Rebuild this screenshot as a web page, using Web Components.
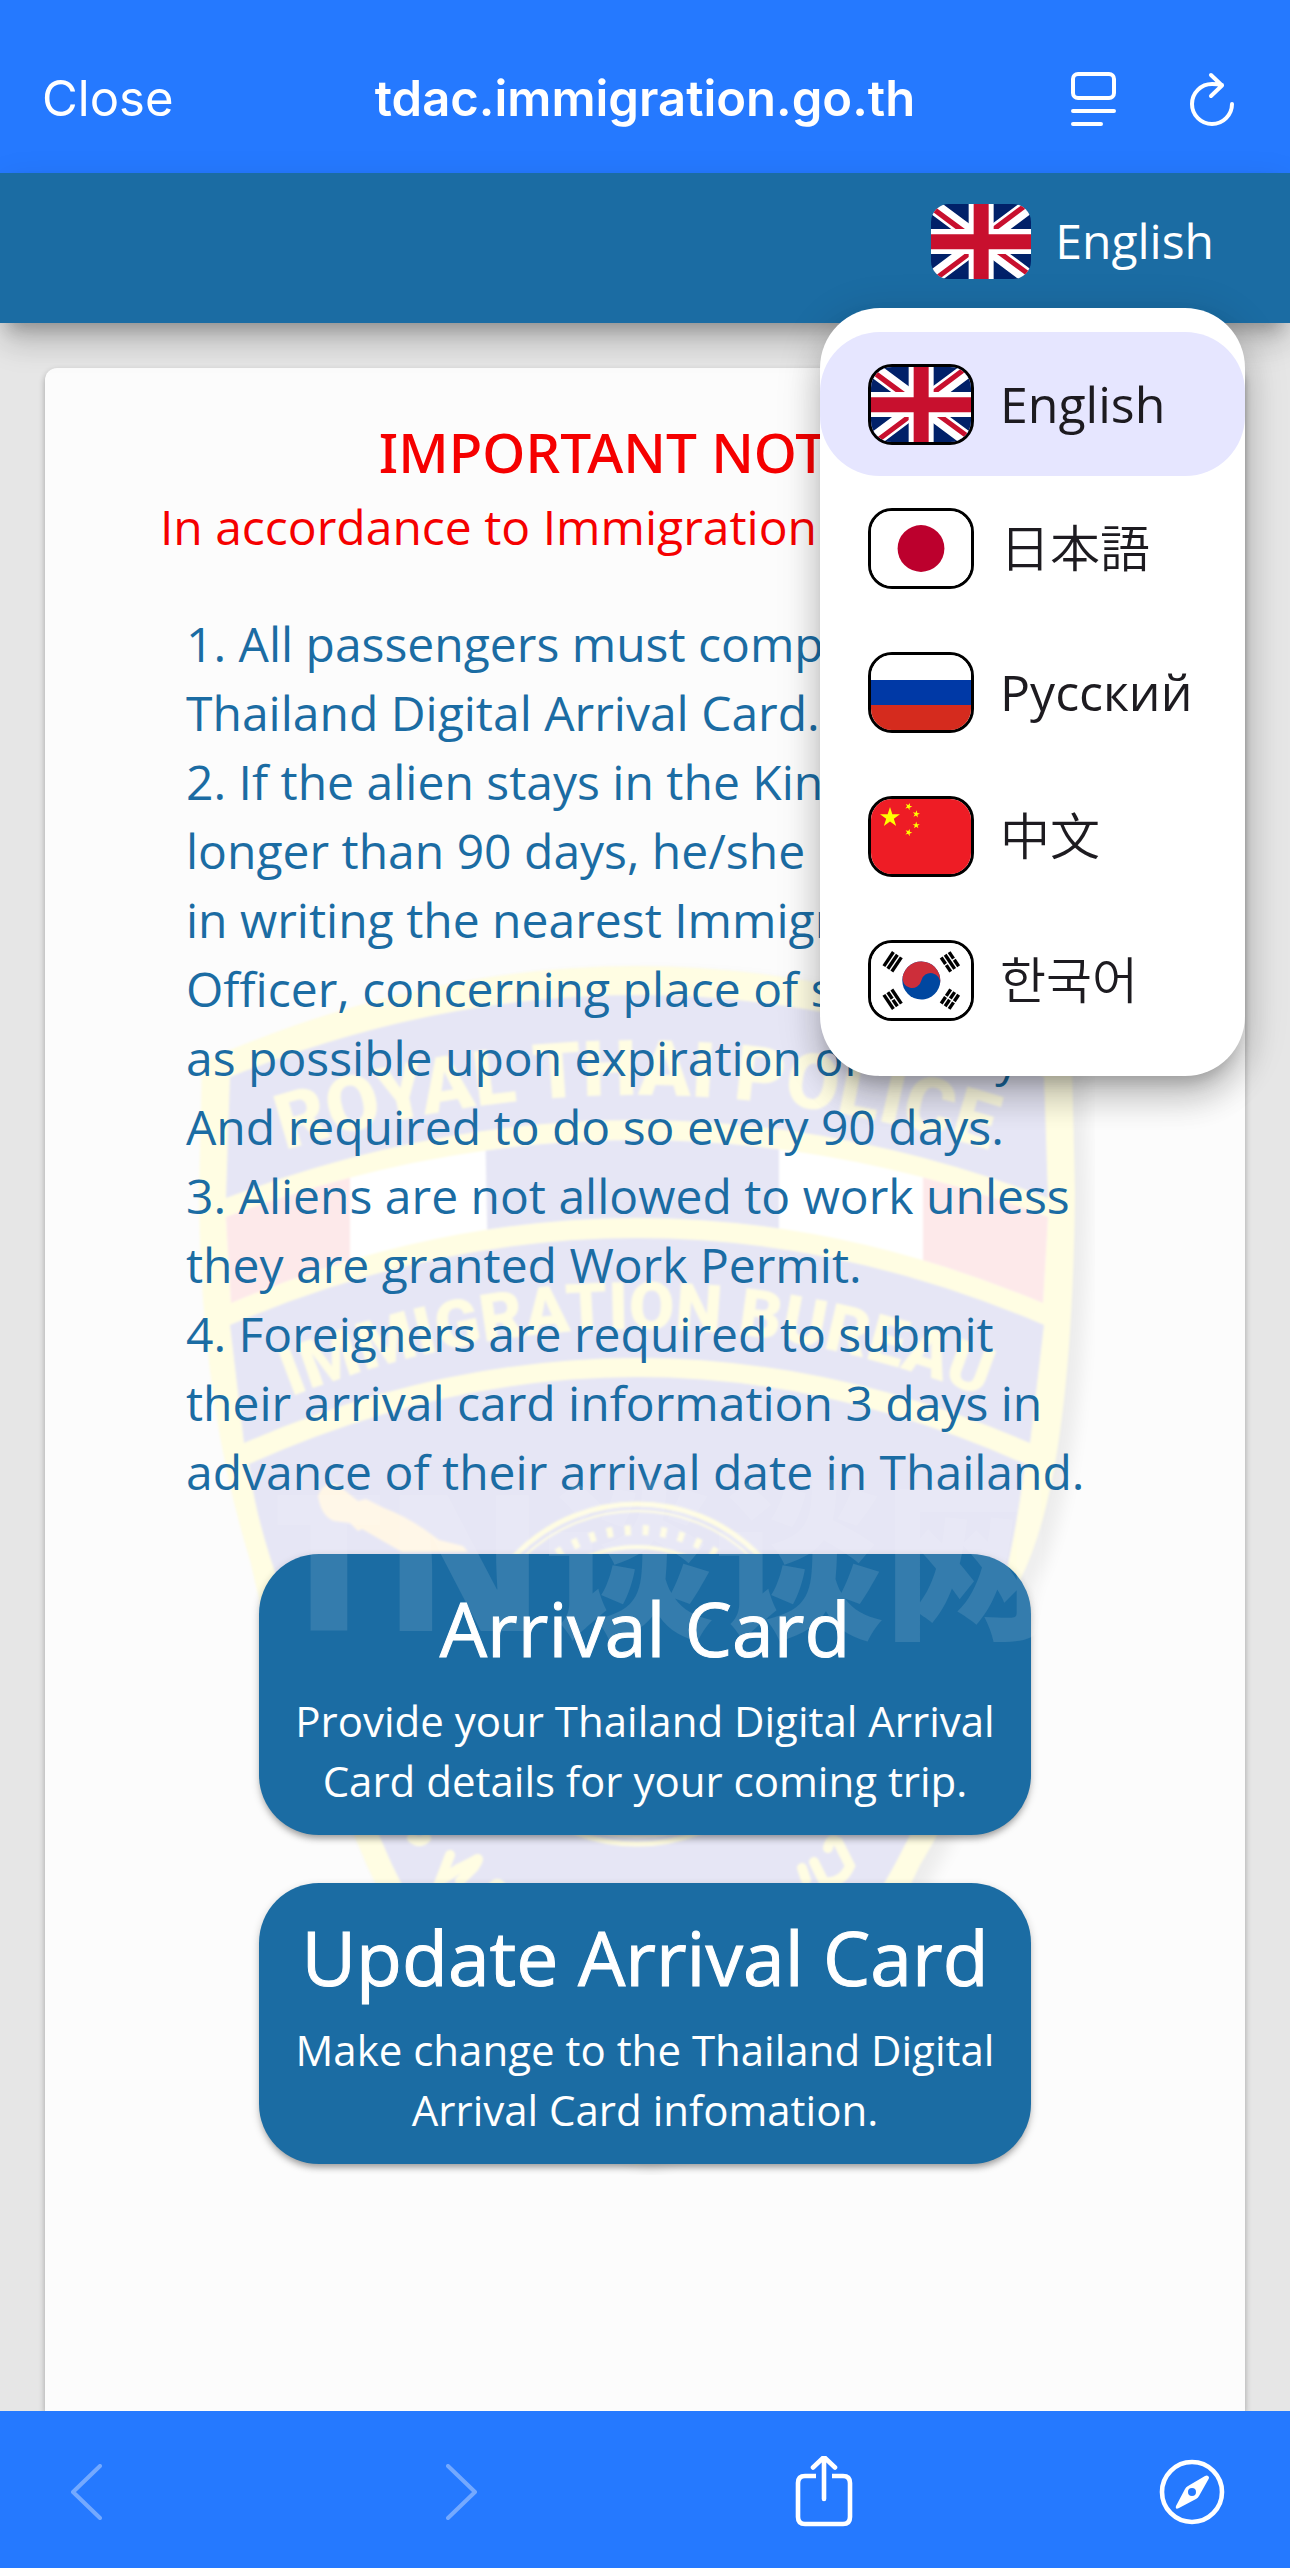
<!DOCTYPE html>
<html lang="en">
<head>
<meta charset="utf-8">
<meta name="viewport" content="width=device-width, initial-scale=1">
<title>Thailand Digital Arrival Card</title>
<style>
  body { margin: 0; background: #e6e6e6; font-family: "Open Sans", "Noto Sans", "Noto Sans CJK JP", sans-serif; }
</style>
</head>
<body>
<arrival-app></arrival-app>

<script>
class BaseElement extends HTMLElement {
  connectedCallback() {
    if (this.shadowRoot) return;
    this.attachShadow({ mode: 'open' }).innerHTML = this.render();
  }
}

/* ---------- flags ---------- */
const star = (cx, cy, r, turn) => {
  let pts = [];
  for (let i = 0; i < 10; i++) {
    const a = (turn - 90 + i * 36) * Math.PI / 180;
    const q = i % 2 ? r * 0.382 : r;
    pts.push((cx + q * Math.cos(a)).toFixed(2) + ',' + (cy + q * Math.sin(a)).toFixed(2));
  }
  return `<polygon points="${pts.join(' ')}" fill="#ff0"/>`;
};
const trigram = (x, y, turn, bars) => `<g transform="translate(${x} ${y}) rotate(${turn})">` +
  bars.map((solid, i) => {
    const bx = -6.6 + i * 4.8;
    return solid
      ? `<rect x="${bx}" y="-8.5" width="3.4" height="17"/>`
      : `<rect x="${bx}" y="-8.5" width="3.4" height="7.8"/><rect x="${bx}" y="0.7" width="3.4" height="7.8"/>`;
  }).join('') + '</g>';

const FLAGS = {
  gb: `<g transform="scale(.15625)"><path fill="#012169" d="M0 0h640v480H0z"/><path fill="#fff" d="m75 0 244 181L562 0h78v62L400 241l240 178v61h-80L320 301 81 480H0v-60l239-178L0 64V0z"/><path fill="#c8102e" d="m424 281 216 159v40L369 281zm-184 20 6 35L54 480H0zM640 0v3L391 191l2-44L590 0zM0 0l239 176h-60L0 42z"/><path fill="#fff" d="M241 0v480h160V0zM0 160v160h640V160z"/><path fill="#c8102e" d="M0 193v96h640v-96zM273 0v480h96V0z"/></g>`,
  jp: `<path fill="#fff" d="M0 0h100v75H0z"/><circle cx="50" cy="37.5" r="23.4" fill="#bc002d"/>`,
  ru: `<path fill="#fff" d="M0 0h100v25H0z"/><path fill="#0039a6" d="M0 25h100v25H0z"/><path fill="#d52b1e" d="M0 50h100v25H0z"/>`,
  cn: `<path fill="#ee1c25" d="M0 0h100v75H0z"/>${star(19, 18.5, 10.5, 0)}${star(37.6, 7.5, 3.8, 23)}${star(45.2, 15, 3.8, 10)}${star(45.2, 26.3, 3.8, 0)}${star(37.6, 33.5, 3.8, 20)}`,
  kr: `<path fill="#fff" d="M0 0h100v75H0z"/><g transform="translate(50.3 37.5) rotate(12)"><circle r="19" fill="#0047a0"/><path fill="#cd2e3a" d="M-19 0A19 19 0 0 1 19 0A9.5 9.5 0 0 0 0 0A9.5 9.5 0 0 1-19 0z"/></g>${trigram(21.7, 18.8, 34, [1, 1, 1])}${trigram(79, 18.8, -34, [0, 1, 0])}${trigram(21.7, 56.2, -34, [1, 0, 1])}${trigram(79, 56.2, 34, [0, 0, 0])}`
};

customElements.define('country-flag', class extends BaseElement {
  render() {
    return `<style>
      :host { display: block; box-sizing: border-box; flex: none; overflow: hidden; border-radius: 18px; }
      :host([outlined]) { border: 3px solid #000; border-radius: 24px; }
      svg { display: block; width: 100px; height: 75px; }
    </style>
    <svg viewBox="0 0 100 75" aria-hidden="true">${FLAGS[this.getAttribute('code')]}</svg>`;
  }
});

/* ---------- browser chrome ---------- */
customElements.define('browser-bar', class extends BaseElement {
  render() {
    return `<style>
      :host { display: grid; grid-template-columns: 1fr auto 1fr; align-items: center; box-sizing: border-box;
        min-height: 173px; padding: 24px 42px 0; background: #2579ff; color: #fff;
        font-family: Inter, "Liberation Sans", sans-serif; font-size: 49px; line-height: 60px; }
      button { all: unset; cursor: pointer; display: block; }
      .close { justify-self: start; }
      .title { font-weight: 600; }
      .tools { justify-self: end; display: flex; align-items: center; gap: 68px; padding-right: 9px; }
      svg { display: block; fill: none; stroke: #fff; stroke-width: 4; stroke-linecap: round; stroke-linejoin: round; }
    </style>
    <button class="close">Close</button>
    <div class="title">${this.getAttribute('address')}</div>
    <div class="tools">
      <button aria-label="Reader view"><svg width="50" height="56" viewBox="0 0 50 56"><rect x="4" y="3" width="41" height="24" rx="5"/><path d="M4 40h41M4 53h28"/></svg></button>
      <button aria-label="Reload"><svg width="52" height="56" viewBox="0 0 52 56"><path d="M46 33a20 20 0 1 1-20-20q5 0 10 1M25 4l11 10.500-11 10.500" transform="translate(-1 0)"/></svg></button>
    </div>`;
  }
});

customElements.define('browser-toolbar', class extends BaseElement {
  render() {
    return `<style>
      :host { display: flex; justify-content: space-between; align-items: center; box-sizing: border-box;
        min-height: 157px; padding: 4px 62px 0 51px; background: #2579ff; position: relative; z-index: 3; }
      button { all: unset; cursor: pointer; display: block; }
      svg { display: block; width: 72px; height: 72px; fill: none; stroke: #fff; stroke-width: 4; stroke-linecap: round; stroke-linejoin: round; }
      button:disabled { opacity: .36; cursor: default; }
    </style>
    <button aria-label="Back" disabled><svg viewBox="0 0 72 72"><path d="M49 10L22 36l27 26"/></svg></button>
    <button aria-label="Forward" disabled><svg viewBox="0 0 72 72"><path d="M29 10l27 26-27 26"/></svg></button>
    <button aria-label="Share"><svg viewBox="0 0 72 72"><g stroke-width="4.600"><path stroke-linecap="butt" d="M28 20H17q-7 0-7 7v34q0 7 7 7h38q7 0 7-7V27q0-7-7-7H44"/><path d="M36 43V1M25 11.500L36 1l11 10.500"/></g></svg></button>
    <button aria-label="Open in browser"><svg viewBox="0 0 72 72"><circle cx="36" cy="36" r="30" stroke-width="4.600"/><path fill="#fff" fill-rule="evenodd" stroke="none" d="M52 20q2 1 0 4L43 40q-1 2-3 3L23 52q-4 2-3-2l9-17q1-2 3-3l17-10q2-1 3 0zM36 32a4 4 0 1 0 0 8a4 4 0 0 0 0-8z"/></svg></button>`;
  }
});

/* ---------- site header and language menu ---------- */
customElements.define('language-option', class extends BaseElement {
  render() {
    const on = this.hasAttribute('selected');
    return `<style>
      :host { display: block; }
      button { all: unset; box-sizing: border-box; width: 100%; min-height: 144px; padding: 0 48px; border-radius: 60px;
        display: flex; align-items: center; gap: 26px; cursor: pointer; color: #1d1b20; font-size: 50px; line-height: 72px; white-space: nowrap; }
      :host([selected]) button { background: #e6e6ff; }
      :host(:is([lang=ja], [lang=zh], [lang=ko])) button { font-weight: 350; }
    </style>
    <button role="menuitemradio" aria-checked="${on}"><country-flag outlined code="${this.getAttribute('flag')}"></country-flag><slot></slot></button>`;
  }
});

customElements.define('site-header', class extends BaseElement {
  render() {
    return `<style>
      :host { display: flex; justify-content: flex-end; align-items: center; box-sizing: border-box; position: relative; z-index: 2;
        min-height: 150px; padding: 0 76px 14px 45px; background: #1b6ca3;
        box-shadow: 0 15px 15px -9px rgba(0,0,0,.2), 0 24px 30px -3px rgba(0,0,0,.14), 0 9px 36px -3px rgba(0,0,0,.12); }
      .current { all: unset; display: flex; align-items: center; gap: 24px; cursor: pointer; color: #fff; font-size: 48px; line-height: 72px; }
      .menu { position: absolute; top: 135px; right: 45px; min-width: 425px; padding: 24px 0; box-sizing: border-box; background: #fff; border-radius: 60px;
        box-shadow: 0 15px 15px -9px rgba(0,0,0,.2), 0 24px 30px 3px rgba(0,0,0,.14), 0 9px 42px 6px rgba(0,0,0,.12); }
    </style>
    <button class="current" aria-haspopup="menu" aria-expanded="true"><country-flag code="gb"></country-flag><span>English</span></button>
    <div class="menu" role="menu">
      <language-option flag="gb" selected>English</language-option>
      <language-option flag="jp" lang="ja">日本語</language-option>
      <language-option flag="ru" lang="ru">Русский</language-option>
      <language-option flag="cn" lang="zh">中文</language-option>
      <language-option flag="kr" lang="ko">한국어</language-option>
    </div>`;
  }
});

/* ---------- emblem behind the notice ---------- */
customElements.define('bureau-emblem', class extends BaseElement {
  render() {
    return `<style>
      :host { display: block; }
      svg { display: block; width: 100%; height: auto; }
      text { font-family: Roboto, sans-serif; font-weight: 900; fill: #fffde3; text-anchor: middle; }
      .y { fill: none; stroke: #fffde3; }
    </style>
    <svg viewBox="195 960 900 1215" aria-hidden="true">
      <defs>
        <filter id="soft" x="-10%" y="-10%" width="120%" height="120%"><feGaussianBlur stdDeviation="1.200"/></filter>
        <filter id="drop" x="-10%" y="-10%" width="120%" height="120%"><feGaussianBlur stdDeviation="8"/></filter>
        <path id="arc1" d="M235 1167Q637 1023 1039 1167"/>
        <path id="arc2" d="M240 1418Q637 1240 1034 1418"/>
        <clipPath id="band"><path d="M226 1217Q637 1063 1048 1217L1043 1303Q637 1133 231 1303z"/></clipPath>
        <path id="shield" d="M202 1062Q637 870 1072 1062L1075 1193Q1072 1480 1020 1580Q985 1760 920 1865Q830 2060 637 2165Q444 2060 354 1835Q280 1700 250 1560Q200 1400 199 1193z"/>
      </defs>
      <use href="#shield" transform="translate(14 8)" fill="#000" opacity=".06" filter="url(#drop)"/>
      <g filter="url(#soft)">
        <use href="#shield" fill="#fffde3"/>
        <g fill="#e6e6f5">
          <path d="M230 1077Q637 913 1044 1077L1048 1198Q637 1042 226 1198z"/>
          <path d="M230 1325Q637 1151 1044 1325L1030 1443Q637 1273 244 1443z"/>
          <path d="M249 1464Q637 1290 1025 1464Q1010 1580 985 1640Q960 1760 910 1835Q815 2030 637 2130Q459 2030 379 1835Q310 1700 285 1600Q255 1520 249 1464z"/>
        </g>
        <g clip-path="url(#band)">
          <path fill="#fff" d="M220 1120h840v200H220z"/>
          <path fill="#fde9ea" d="M220 1120h130v200H220zM923 1120h130v200H923z"/>
          <path fill="#e6e6f5" d="M485 1120h294v200H489z"/>
        </g>
        <circle cx="637" cy="1674" r="170" class="y" stroke-width="5"/>
        <circle cx="637" cy="1674" r="163" class="y" stroke-width="2"/>
        <circle cx="637" cy="1674" r="144" class="y" stroke-width="10" stroke-dasharray="6 12"/>
        <circle cx="637" cy="1674" r="127" class="y" stroke-width="4"/>
        <path fill="#fff6e6" d="M318 1496q3 20 16 25l16 2 8 8 4-2 40 23h66l-5-6-24-6q-28-22-55-32l-18-9-8 2-20-16q-14-5-20 11z"/>
        <g class="y" stroke-width="10" stroke-linecap="round">
          <path d="M412 1838q8 6 14 0M450 1855l-10 26 18-12 16-8q8-6 0 6l-14 14M490 1890q10-14 14 4M806 1880l-4-12M814 1862l10 20q18 2 26-16l-12-24q-8-6-10 6"/>
        </g>
        <text font-size="77"><textPath href="#arc1" startOffset="50%">ROYAL THAI POLICE</textPath></text>
        <text font-size="66"><textPath href="#arc2" startOffset="50%">IMMIGRATION BUREAU</textPath></text>
      </g>
    </svg>`;
  }
});

customElements.define('source-mark', class extends BaseElement {
  render() {
    return `<style>
      :host { display: flex; justify-content: center; align-items: center; padding-left: 36px; color: rgba(255,255,255,.11);
        font-weight: 900; line-height: 200px; white-space: nowrap; pointer-events: none; user-select: none; }
      .latin { font-family: "Open Sans", sans-serif; font-size: 190px; }
      .han { font-family: "Noto Sans CJK SC", sans-serif; font-size: 170px; line-height: 180px; padding-bottom: 12px; }
    </style><span class="latin">TN</span><span class="han">谈谈网</span>`;
  }
});

/* ---------- notice card ---------- */
customElements.define('action-button', class extends BaseElement {
  render() {
    return `<style>
      :host { display: block; width: min(100%, 772px); }
      button { all: unset; box-sizing: border-box; width: 100%; padding: 24px 30px; border-radius: 60px; cursor: pointer;
        display: flex; flex-direction: column; gap: 13px; text-align: center; background: #1b6ca3; color: #fff;
        box-shadow: 0 6px 6px -3px rgba(0,0,0,.25), 0 3px 9px rgba(0,0,0,.2); }
      .name { font-size: 75px; line-height: 100px; -webkit-text-stroke: 1px #fff; }
      .info { font-size: 42px; line-height: 60px; }
    </style>
    <button><span class="name">${this.getAttribute('name')}</span><span class="info"><slot></slot></span></button>`;
  }
});

customElements.define('notice-card', class extends BaseElement {
  render() {
    return `<style>
      :host { display: grid; grid-template-columns: minmax(0, 1fr); background: #fcfcfc; border-radius: 12px 12px 0 0; overflow: hidden;
        box-shadow: 0 3px 6px rgba(0,0,0,.3); }
      bureau-emblem, .content, source-mark { grid-area: 1 / 1; align-self: start; }
      bureau-emblem { width: 75%; justify-self: center; margin-top: 592px; }
      .content { position: relative; padding: 44px 0 48px; display: flex; flex-direction: column; align-items: center; gap: 48px; }
      header { color: #f50000; text-align: center; }
      h1 { margin: 0; font-family: "Noto Sans", "Open Sans", sans-serif; font-size: 55px; line-height: 80px; font-weight: 500; }
      header p { margin: 0; font-size: 48px; line-height: 69px; }
      ol { list-style: none; margin: 0; padding: 0 141px; box-sizing: border-box; width: 100%; color: #1b6ca3; font-size: 48px; line-height: 69px; }
      source-mark { position: relative; margin-top: 1090px; }
    </style>
    <bureau-emblem></bureau-emblem>
    <div class="content">
      <header>
        <h1>IMPORTANT NOTICE</h1>
        <p>In accordance to Immigration Act B.E. 2522.</p>
      </header>
      <ol>
        <li>1. All passengers must complete the Thailand Digital Arrival Card.</li>
        <li>2. If the alien stays in the Kingdom longer than 90 days, he/she must notify in writing the nearest Immigration Officer, concerning place of stay, as soon as possible upon expiration of 90 days. And required to do so every 90 days.</li>
        <li>3. Aliens are not allowed to work unless they are granted Work Permit.</li>
        <li>4. Foreigners are required to submit their arrival card information 3 days in advance of their arrival date in Thailand.</li>
      </ol>
      <action-button name="Arrival Card">Provide your Thailand Digital Arrival Card details for your coming trip.</action-button>
      <action-button name="Update Arrival Card">Make change to the Thailand Digital Arrival Card infomation.</action-button>
    </div>
    <source-mark aria-hidden="true" lang="zh"></source-mark>`;
  }
});

customElements.define('arrival-app', class extends BaseElement {
  render() {
    return `<style>
      :host { display: flex; flex-direction: column; min-height: 100vh; }
      main { flex: 1; display: flex; flex-direction: column; padding: 45px 45px 0; }
      notice-card { flex: 1; }
    </style>
    <browser-bar address="tdac.immigration.go.th"></browser-bar>
    <site-header></site-header>
    <main><notice-card></notice-card></main>
    <browser-toolbar></browser-toolbar>`;
  }
});
</script>
</body>
</html>
